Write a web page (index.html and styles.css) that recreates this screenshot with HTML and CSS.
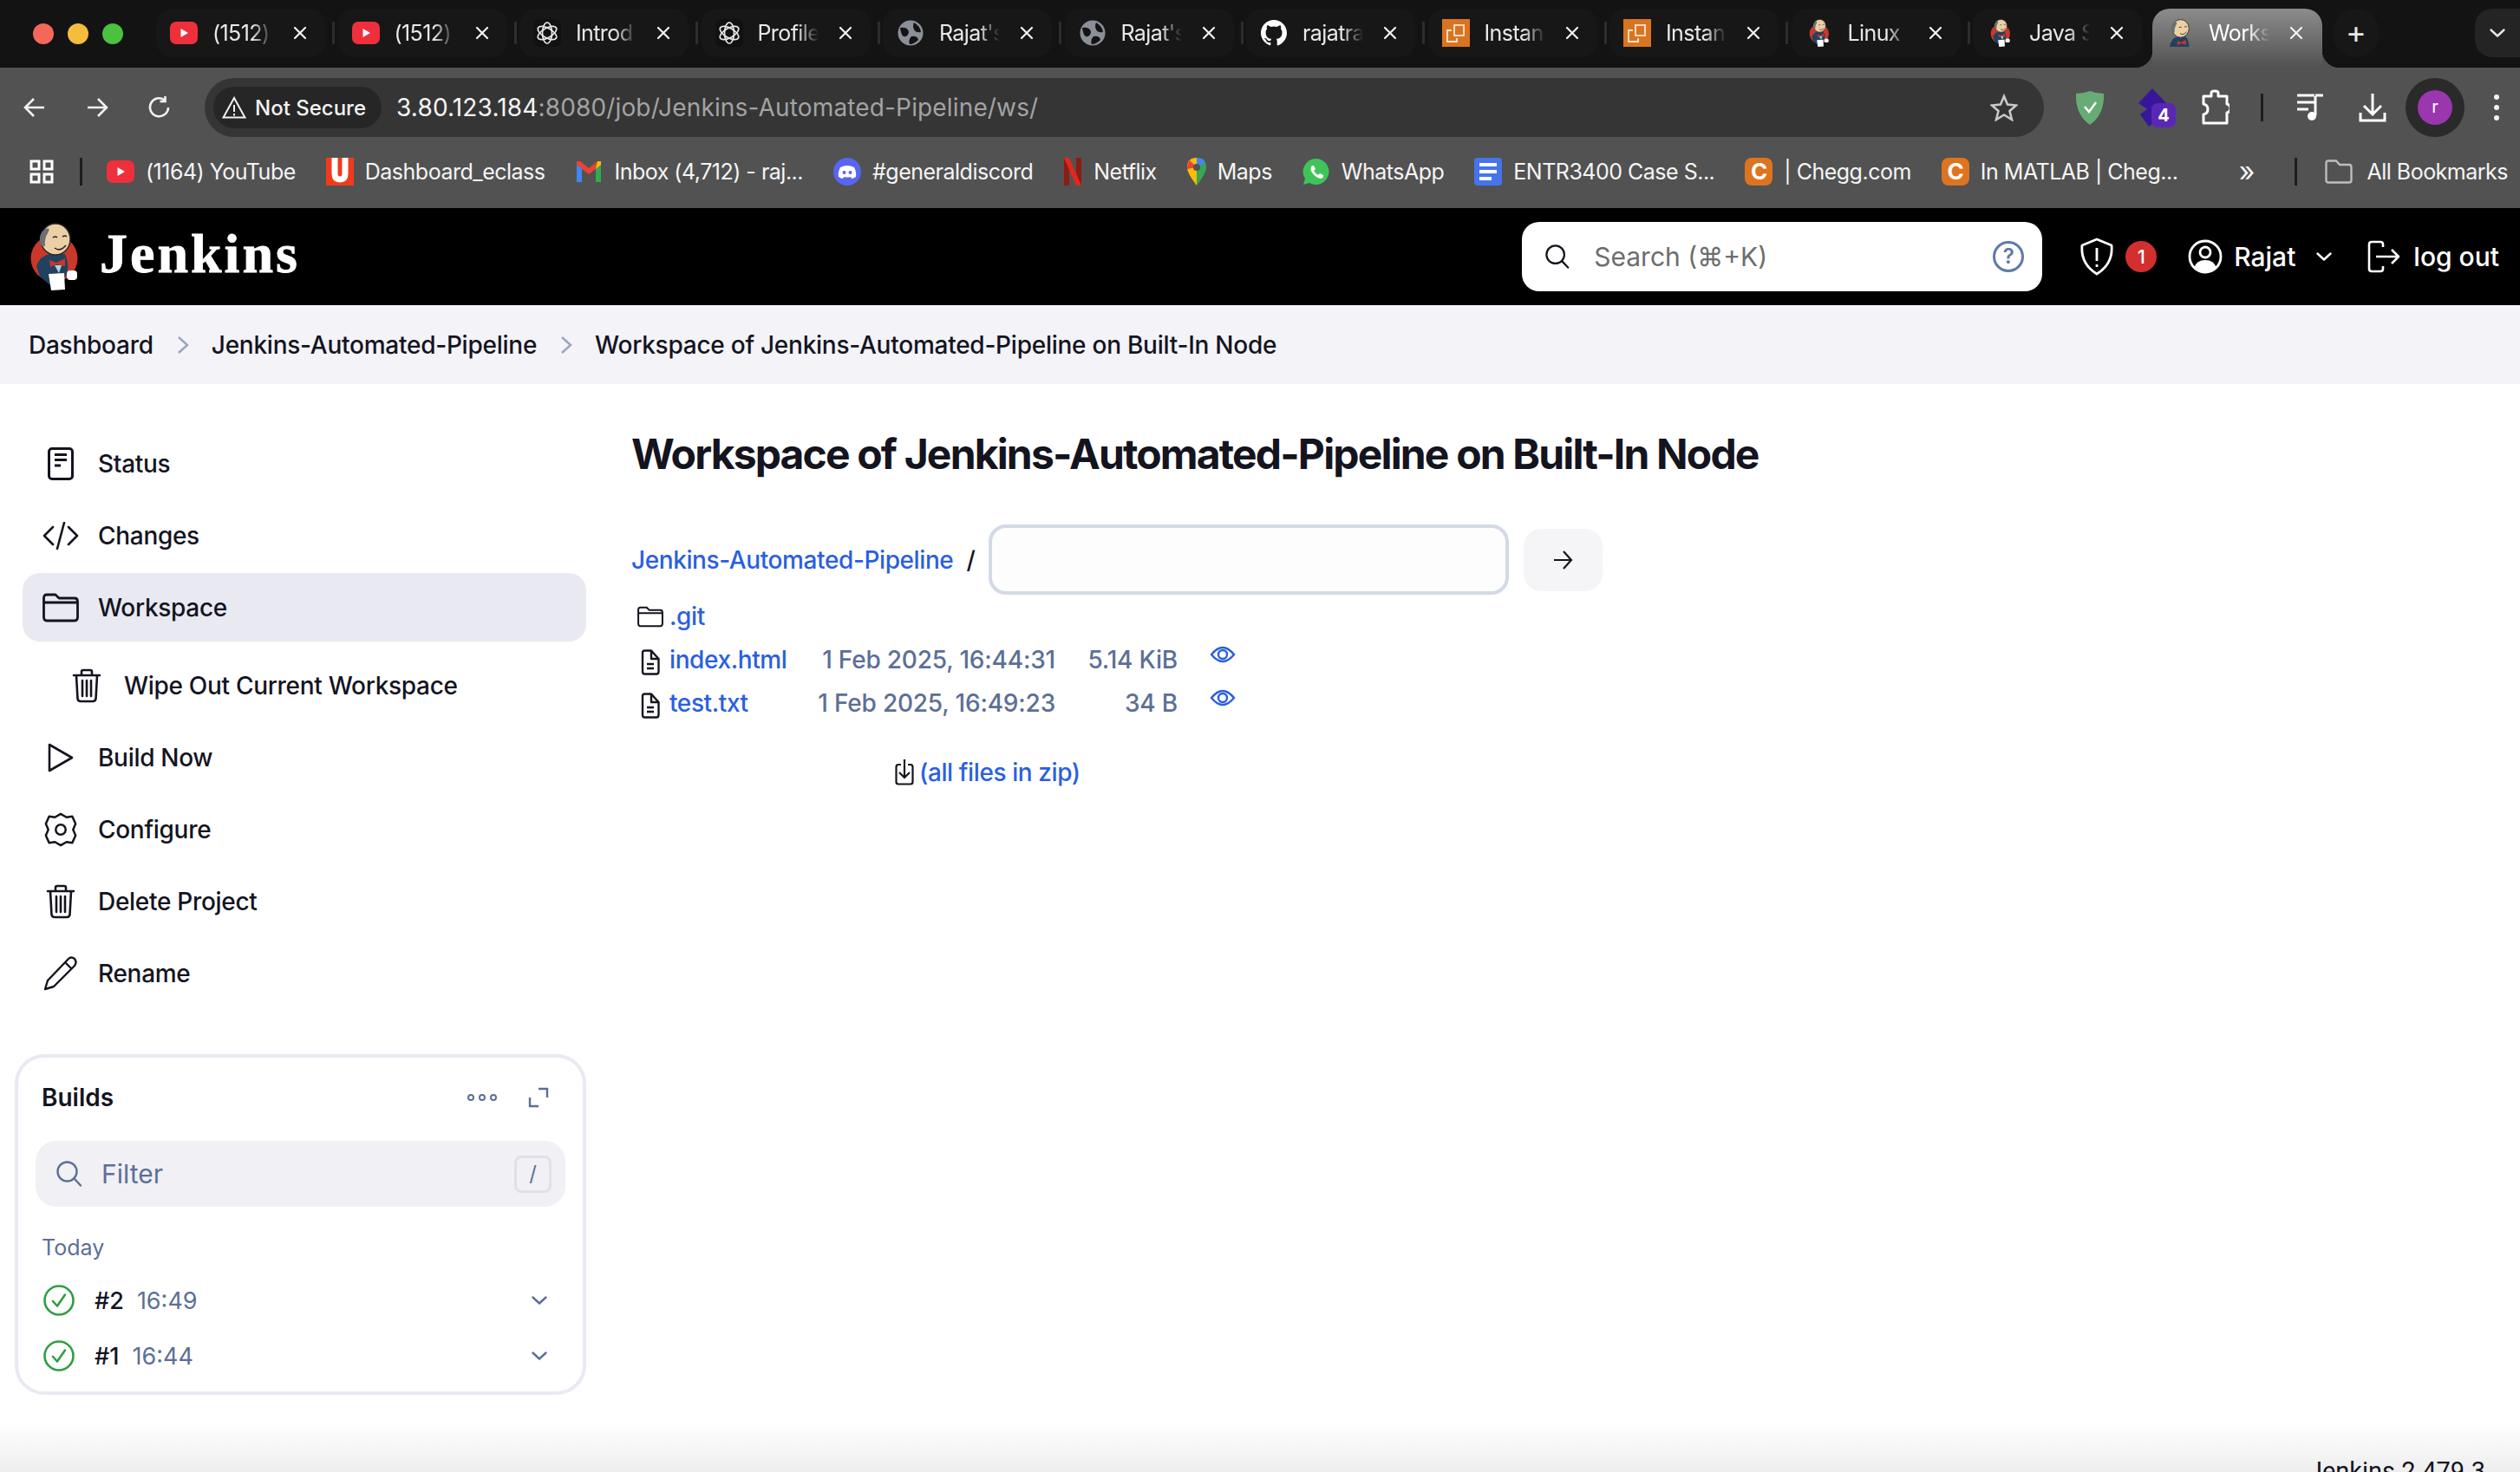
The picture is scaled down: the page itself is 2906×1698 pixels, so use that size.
FILE: index.html
```html
<!DOCTYPE html>
<html lang="en">
  <head>
    <meta charset="UTF-8" />
    <title>Jenkins-Automated-Pipeline Workspace</title>
    <link rel="stylesheet" href="styles.css">
  </head>
  <body>
    <svg class="sprite">
      <symbol id="i-yt" viewBox="0 0 32 32">
        <rect x="0" y="3" width="32" height="26" rx="7" fill="#ef2f3c" />
        <path d="M12.500 11 L21 16 L12.500 21Z" fill="#fff" />
      </symbol>
      <symbol id="i-gpt" viewBox="0 0 32 32">
        <rect width="32" height="32" rx="7" fill="#111" />
        <g fill="none" stroke="#e8e8e8" stroke-width="1.700">
          <ellipse cx="16" cy="16" rx="5.500" ry="12" />
          <ellipse cx="16" cy="16" rx="5.500" ry="12" transform="rotate(60 16 16)" />
          <ellipse cx="16" cy="16" rx="5.500" ry="12" transform="rotate(120 16 16)" />
        </g>
      </symbol>
      <symbol id="i-globe" viewBox="0 0 32 32">
        <circle cx="16" cy="16" r="14.500" fill="#8b9098" />
        <path d="M4 10 Q13 9 14 15 Q13 21 8 20 Q5 18 4 10Z M20 4 Q27 8 28 15 Q22 16 20 12 Q18 8 20 4Z M17 20 Q24 19 25 24 Q20 29 15 29 Q13 24 17 20Z" fill="#131313" />
      </symbol>
      <symbol id="i-gh" viewBox="0 0 32 32">
        <path fill="#fff" d="M16 1C7.700 1 1 7.700 1 16c0 6.600 4.300 12.200 10.300 14.200.8.100 1-.3 1-.7v-2.600c-4.200.9-5-1.800-5-1.800-.7-1.700-1.700-2.200-1.700-2.200-1.400-.9.100-.9.100-.9 1.500.1 2.300 1.500 2.300 1.500 1.300 2.300 3.500 1.600 4.400 1.300.1-1 .5-1.600 1-2-3.300-.4-6.800-1.700-6.800-7.400 0-1.600.6-3 1.500-4-.2-.4-.7-1.900.1-4 0 0 1.300-.4 4.100 1.500 1.200-.3 2.500-.5 3.700-.5s2.500.2 3.700.5c2.900-1.900 4.100-1.500 4.100-1.500.8 2.100.3 3.600.2 4 1 1 1.500 2.400 1.500 4 0 5.800-3.500 7-6.800 7.400.5.500 1 1.400 1 2.800v4.100c0 .4.300.9 1 .7C26.700 28.200 31 22.600 31 16 31 7.700 24.300 1 16 1Z" />
      </symbol>
      <symbol id="i-aws" viewBox="0 0 32 32">
        <rect width="32" height="32" fill="#d9741f" />
        <g fill="none" stroke="#f5e6d5" stroke-width="1.800">
          <rect x="14" y="7" width="11" height="12" />
          <path d="M11 13 H6 V26 H17 V22" />
        </g>
      </symbol>
      <symbol id="i-butler" viewBox="0 0 56 78">
        <circle cx="27.500" cy="41" r="27" fill="#c9382b" />
        <path d="M7 50 Q10 39 22 36 L40 36 Q46 50 41 62 L23 72 L11 62Z" fill="#20425f" />
        <path d="M22 43 L30 46 L40 41 L40 50 L30 48 L23 51Z" fill="#c8352b" />
        <path d="M28 49 L36 49 L33 58Z" fill="#b8d0e0" />
        <ellipse cx="29" cy="19" rx="17" ry="18" fill="#edcfa6" stroke="#2a2a2a" stroke-width="1.500" />
        <path d="M12 26 Q8 12 18 7 Q24 5 20 12 Q16 18 17 27Z" fill="#6b6f75" />
        <path d="M26 17 Q29 15 31 17 M37 16 Q40 14 42 16 M28 29 Q34 34 41 26" fill="none" stroke="#2a2a2a" stroke-width="1.600" />
        <path d="M21 59 L39 58 L40 77 L24 78Z" fill="#fff" />
        <rect x="42" y="55" width="12" height="11" rx="4" fill="#fff" />
      </symbol>
      <symbol id="i-head" viewBox="6 0 44 56">
        <path d="M7 56 Q10 39 22 36 L40 36 Q46 44 46 56Z" fill="#20425f" />
        <path d="M22 44 L30 47 L40 42 L40 52 L30 49 L23 53Z" fill="#c8352b" />
        <ellipse cx="29" cy="19" rx="17" ry="18" fill="#edcfa6" stroke="#2a2a2a" stroke-width="1.500" />
        <path d="M12 26 Q8 12 18 7 Q24 5 20 12 Q16 18 17 27Z" fill="#6b6f75" />
        <path d="M26 17 Q29 15 31 17 M37 16 Q40 14 42 16 M28 29 Q34 34 41 26" fill="none" stroke="#2a2a2a" stroke-width="1.600" />
      </symbol>
      <symbol id="i-x" viewBox="0 0 16 16">
        <path d="M2 2 L14 14 M14 2 L2 14" stroke="#f2f2f2" stroke-width="2.200" stroke-linecap="round" />
      </symbol>
      <symbol id="i-doc" viewBox="0 0 30 38">
        <rect x="1.500" y="1.500" width="27" height="35" rx="3.500" fill="none" stroke="currentColor" stroke-width="3" />
        <path d="M8 8.500 H22 M8 14.500 H22 M8 21 H15" stroke="currentColor" stroke-width="2.800" />
      </symbol>
      <symbol id="i-folder" viewBox="0 0 42 34">
        <path d="M1.500 6 Q1.500 2 5 2 H15 L19 6 H37 Q40.500 6 40.500 10 V28 Q40.500 32 37 32 H5 Q1.500 32 1.500 28Z M1.500 11 H40.500" fill="none" stroke="currentColor" stroke-width="2.800" stroke-linejoin="round" />
      </symbol>
      <symbol id="i-trash" viewBox="0 0 34 40">
        <path d="M2 8 H32 M11 8 V4 Q11 2 13 2 H21 Q23 2 23 4 V8 M5 8 L6.500 35 Q7 38 10 38 H24 Q27 38 27.500 35 L29 8 M12 14 V32 M17 14 V32 M22 14 V32" fill="none" stroke="currentColor" stroke-width="2.600" stroke-linecap="round" />
      </symbol>
      <symbol id="i-file" viewBox="0 0 22 30">
        <path d="M2 4 Q2 1.500 4.500 1.500 H12 L20.500 11 V25.500 Q20.500 28.500 18 28.500 H4.500 Q2 28.500 2 25.500Z M12 1.500 V11 H20.500 M7 17 H15 M7 22 H15" fill="none" stroke="currentColor" stroke-width="2.400" stroke-linejoin="round" />
      </symbol>
      <symbol id="i-eye" viewBox="0 0 30 20">
        <path d="M2 10 Q15 -6 28 10 Q15 26 2 10Z" fill="none" stroke="currentColor" stroke-width="2.400" />
        <circle cx="15" cy="10" r="5" fill="none" stroke="currentColor" stroke-width="2.400" />
      </symbol>
      <symbol id="i-check" viewBox="0 0 36 36">
        <circle cx="18" cy="18" r="16.500" fill="none" stroke="#2f9e44" stroke-width="2.600" />
        <path d="M11 19 L16 24.500 L25 11.500" fill="none" stroke="#2f9e44" stroke-width="2.600" stroke-linecap="round" stroke-linejoin="round" />
      </symbol>
      <symbol id="i-chev" viewBox="0 0 18 10">
        <path d="M1.500 1.500 L9 8.500 L16.500 1.500" fill="none" stroke="currentColor" stroke-width="2.400" stroke-linecap="round" stroke-linejoin="round" />
      </symbol>
      <symbol id="i-search" viewBox="0 0 30 30">
        <circle cx="12.500" cy="12.500" r="11" fill="none" stroke="currentColor" stroke-width="2.400" />
        <path d="M20.500 20.500 L28 28.500" stroke="currentColor" stroke-width="2.400" stroke-linecap="round" />
      </symbol>
    </svg>

    <div class="tabstrip">
      <div class="lights"><i class="light red"></i><i class="light amber"></i><i class="light green"></i></div>
      <div class="tab"><svg class="fav"><use href="#i-yt" /></svg><span class="tab-title">(1512)</span><svg class="tab-x"><use href="#i-x" /></svg></div><i class="tab-sep"></i>
      <div class="tab"><svg class="fav"><use href="#i-yt" /></svg><span class="tab-title">(1512)</span><svg class="tab-x"><use href="#i-x" /></svg></div><i class="tab-sep"></i>
      <div class="tab"><svg class="fav"><use href="#i-gpt" /></svg><span class="tab-title">Introd</span><svg class="tab-x"><use href="#i-x" /></svg></div><i class="tab-sep"></i>
      <div class="tab"><svg class="fav"><use href="#i-gpt" /></svg><span class="tab-title">Profile</span><svg class="tab-x"><use href="#i-x" /></svg></div><i class="tab-sep"></i>
      <div class="tab"><svg class="fav"><use href="#i-globe" /></svg><span class="tab-title">Rajat's</span><svg class="tab-x"><use href="#i-x" /></svg></div><i class="tab-sep"></i>
      <div class="tab"><svg class="fav"><use href="#i-globe" /></svg><span class="tab-title">Rajat's</span><svg class="tab-x"><use href="#i-x" /></svg></div><i class="tab-sep"></i>
      <div class="tab"><svg class="fav"><use href="#i-gh" /></svg><span class="tab-title">rajatra</span><svg class="tab-x"><use href="#i-x" /></svg></div><i class="tab-sep"></i>
      <div class="tab"><svg class="fav"><use href="#i-aws" /></svg><span class="tab-title">Instan</span><svg class="tab-x"><use href="#i-x" /></svg></div><i class="tab-sep"></i>
      <div class="tab"><svg class="fav"><use href="#i-aws" /></svg><span class="tab-title">Instan</span><svg class="tab-x"><use href="#i-x" /></svg></div><i class="tab-sep"></i>
      <div class="tab"><svg class="fav"><use href="#i-butler" /></svg><span class="tab-title">Linux</span><svg class="tab-x"><use href="#i-x" /></svg></div><i class="tab-sep"></i>
      <div class="tab"><svg class="fav"><use href="#i-butler" /></svg><span class="tab-title">Java S</span><svg class="tab-x"><use href="#i-x" /></svg></div>
      <div class="tab tab-active"><svg class="fav"><use href="#i-head" /></svg><span class="tab-title">Works</span><svg class="tab-x"><use href="#i-x" /></svg></div>
      <span class="new-tab">+</span>
      <span class="tab-menu"><svg class="tab-menu-icon"><use href="#i-chev" /></svg></span>
    </div>

    <div class="toolbar">
      <svg class="tool-icon" viewBox="0 0 28 28"><path d="M25 14 H4 M13 4 L3 14 L13 24" fill="none" stroke="#f2f2f2" stroke-width="2.600" /></svg>
      <svg class="tool-icon" viewBox="0 0 28 28"><path d="M3 14 H24 M15 4 L25 14 L15 24" fill="none" stroke="#f2f2f2" stroke-width="2.600" /></svg>
      <svg class="tool-icon" viewBox="0 0 28 28"><path d="M24 14 A10.500 10.500 0 1 1 20 5.500 M20.500 1 V7 H14.500" fill="none" stroke="#f2f2f2" stroke-width="2.600" /></svg>
      <div class="omnibox">
        <span class="chip">
          <svg class="chip-icon" viewBox="0 0 28 26"><path d="M14 2 L26.500 24.500 H1.500Z M14 10 V18 M14 20 V22.500" fill="none" stroke="#f2f2f2" stroke-width="2" /></svg>
          Not Secure
        </span>
        <span class="url"><b>3.80.123.184</b>:8080/job/Jenkins-Automated-Pipeline/ws/</span>
        <svg class="star" viewBox="0 0 32 32"><path d="M16 3 L20 12.500 L30 13.500 L22.500 20 L25 30 L16 24.500 L7 30 L9.500 20 L2 13.500 L12 12.500Z" fill="none" stroke="#c8c8c8" stroke-width="2.600" /></svg>
      </div>
      <svg class="ext ext-shield" viewBox="0 0 32 40"><path d="M16 1 Q24 4 32 4 Q33 28 16 40 Q-1 28 0 4 Q8 4 16 1Z" fill="#68ac75" /><path d="M10 19 L15 25 L23 14" fill="none" stroke="#fff" stroke-width="2.400" /></svg>
      <span class="ext-stack">
        <svg class="ext-stack-icon" viewBox="0 0 32 44"><path d="M16 0 L32 17 L20 24 L28 32 L12 44 L2 30 L10 24 L0 17Z" fill="#37169c" /></svg>
        <span class="ext-badge">4</span>
      </span>
      <svg class="ext ext-puzzle" viewBox="0 0 32 42"><path d="M2 8 H11 V4 Q11 2 15 2 Q19 2 19 4 V8 H29 V17 Q33 18 33 22 Q33 26 29 27 V39 H2 V29 Q7 28 7 23 Q7 18 2 17Z" fill="none" stroke="#fff" stroke-width="3" stroke-linejoin="round" /></svg>
      <i class="tool-sep"></i>
      <svg class="ext ext-queue" viewBox="0 0 32 34"><path d="M1 3 H21 M1 11 H21 M1 19 H14 M22 4 V26 M22 3 H31" fill="none" stroke="#fff" stroke-width="3" /><circle cx="18" cy="27" r="5" fill="#fff" /></svg>
      <svg class="ext ext-down" viewBox="0 0 32 34"><path d="M16 1 V24 M6 15 L16 25 L26 15 M2 23 V32 H30 V23" fill="none" stroke="#fff" stroke-width="3" /></svg>
      <span class="avatar-ring"><span class="avatar">r</span></span>
      <span class="kebab"><i></i><i></i><i></i></span>
    </div>

    <div class="bookmarks">
      <svg class="apps" viewBox="0 0 28 28"><path d="M2 2 H11 V11 H2Z M17 2 H26 V11 H17Z M2 17 H11 V26 H2Z M17 17 H26 V26 H17Z" fill="none" stroke="#fff" stroke-width="3" /></svg>
      <i class="tool-sep bm-sep"></i>
      <span class="bm"><svg class="bm-icon"><use href="#i-yt" /></svg>(1164) YouTube</span>
      <span class="bm"><svg class="bm-icon" viewBox="0 0 32 32"><rect width="32" height="32" fill="#ef3b1c" /><path d="M10 0 V18 Q10 25 16 25 Q22 25 22 18 V0" fill="none" stroke="#fff" stroke-width="7" /></svg>Dashboard_eclass</span>
      <span class="bm"><svg class="bm-icon" viewBox="0 0 32 32"><path d="M2 28 V8 L6 5 L8 12 V28Z" fill="#4285f4" /><path d="M24 28 V12 L26 5 L30 8 V28Z" fill="#34a853" /><path d="M2 8 L16 19 L30 8 L30 4 L26 4 L16 12 L6 4 L2 4Z" fill="#ea4335" /><path d="M26 4 L30 4 V8 L24 13Z" fill="#fbbc04" /></svg>Inbox (4,712) - raj...</span>
      <span class="bm"><svg class="bm-icon" viewBox="0 0 32 32"><circle cx="16" cy="16" r="16" fill="#5865f2" /><path d="M8 11 Q16 7 24 11 Q27 17 26 22 Q23 24 21 24 L20 22 Q16 23 12 22 L11 24 Q9 24 6 22 Q5 17 8 11Z" fill="#fff" /><circle cx="12.500" cy="17" r="2" fill="#5865f2" /><circle cx="19.500" cy="17" r="2" fill="#5865f2" /></svg>#generaldiscord</span>
      <span class="bm"><svg class="bm-icon bm-narrow" viewBox="0 0 20 32"><path d="M0 0 H6 V32 H0Z M14 0 H20 V32 H14Z" fill="#8e1b14" /><path d="M0 0 H6 L20 32 H14Z" fill="#e0291e" /></svg>Netflix</span>
      <span class="bm"><svg class="bm-icon bm-narrow" viewBox="0 0 22 32"><path d="M11 0 Q22 0 22 11 Q22 18 11 32Z" fill="#34a853" /><path d="M11 0 Q0 0 0 11 Q0 18 11 32Z" fill="#fbbc04" /><path d="M3 3 L11 11 L0 13 Q0 6 3 3Z" fill="#ea4335" /><path d="M11 0 Q18 0 21 6 L11 11Z" fill="#4285f4" /><circle cx="11" cy="11" r="4" fill="#525252" /></svg>Maps</span>
      <span class="bm"><svg class="bm-icon" viewBox="0 0 32 32"><path d="M16 1 A15 15 0 1 1 8 29 L1 31 L3 24 A15 15 0 0 1 16 1Z" fill="#3fc45a" /><path d="M11 9 Q8 12 11 17 Q15 23 21 24 Q25 23 24 20 L20 18 L18 20 Q15 18 13 15 L15 13 L13 9Z" fill="#fff" /></svg>WhatsApp</span>
      <span class="bm"><svg class="bm-icon" viewBox="0 0 32 32"><rect width="32" height="32" rx="4" fill="#4574ed" /><path d="M6 6 H26 V10 H6Z M6 14 H26 V18 H6Z M6 22 H20 V26 H6Z" fill="#fff" /></svg>ENTR3400 Case S...</span>
      <span class="bm"><span class="chegg">C</span>| Chegg.com</span>
      <span class="bm"><span class="chegg">C</span>In MATLAB | Cheg...</span>
      <span class="bm-more">»</span>
      <i class="tool-sep bm-sep2"></i>
      <span class="bm bm-all"><svg class="bm-icon" viewBox="0 0 32 28"><path d="M1.500 4 Q1.500 1.500 4 1.500 H13 L17 6 H28 Q30.500 6 30.500 9 V24 Q30.500 26.500 28 26.500 H4 Q1.500 26.500 1.500 24Z" fill="none" stroke="#bdbdbd" stroke-width="2.400" /></svg>All Bookmarks</span>
    </div>

    <header class="jk-header">
      <svg class="jk-logo"><use href="#i-butler" /></svg>
      <span class="jk-name">Jenkins</span>
      <div class="jk-search">
        <svg class="jk-search-icon"><use href="#i-search" /></svg>
        <span class="jk-search-text">Search (⌘+K)</span>
        <span class="jk-help">?</span>
      </div>
      <svg class="jk-shield" viewBox="0 0 40 44"><path d="M20 2 L37 9 Q39 30 20 42 Q1 30 3 9Z M20 12 V27 M20 31 V34" fill="none" stroke="#fff" stroke-width="2.800" stroke-linejoin="round" /></svg>
      <span class="jk-badge">1</span>
      <svg class="jk-user" viewBox="0 0 40 40"><circle cx="20" cy="20" r="18" fill="none" stroke="#fff" stroke-width="2.800" /><circle cx="20" cy="15" r="6" fill="none" stroke="#fff" stroke-width="2.800" /><path d="M7 33 Q10 24 20 24 Q30 24 33 33 Q20 42 7 33Z" fill="#fff" /></svg>
      <span class="jk-username">Rajat</span>
      <svg class="jk-chev"><use href="#i-chev" /></svg>
      <svg class="jk-logout" viewBox="0 0 38 38"><path d="M18 8 V5 Q18 2 15 2 H5 Q2 2 2 5 V33 Q2 36 5 36 H15 Q18 36 18 33 V30 M10 19 H36 M28 11 L36 19 L28 27" fill="none" stroke="#fff" stroke-width="2.600" stroke-linejoin="round" /></svg>
      <span class="jk-logout-text">log out</span>
    </header>

    <nav class="breadcrumbs">
      <span>Dashboard</span>
      <svg class="crumb-sep" viewBox="0 0 14 22"><path d="M2 2 L12 11 L2 20" fill="none" stroke="#98a4bf" stroke-width="2.400" /></svg>
      <span>Jenkins-Automated-Pipeline</span>
      <svg class="crumb-sep" viewBox="0 0 14 22"><path d="M2 2 L12 11 L2 20" fill="none" stroke="#98a4bf" stroke-width="2.400" /></svg>
      <span>Workspace of Jenkins-Automated-Pipeline on Built-In Node</span>
    </nav>

    <div class="layout">
      <aside class="sidebar">
        <ul class="side-nav">
          <li class="nav-item"><span class="nav-icon"><svg class="ic-status"><use href="#i-doc" /></svg></span>Status</li>
          <li class="nav-item"><span class="nav-icon"><svg class="ic-wide" viewBox="0 0 42 32"><path d="M12 6 L2 16 L12 26 M30 6 L40 16 L30 26 M25 1 L17 31" fill="none" stroke="currentColor" stroke-width="2.600" stroke-linecap="round" stroke-linejoin="round" /></svg></span>Changes</li>
          <li class="nav-item nav-active"><span class="nav-icon"><svg class="ic-wide ic-folder"><use href="#i-folder" /></svg></span>Workspace</li>
          <li class="nav-item nav-sub"><span class="nav-icon"><svg class="ic-trash"><use href="#i-trash" /></svg></span>Wipe Out Current Workspace</li>
          <li class="nav-item"><span class="nav-icon"><svg class="ic-play" viewBox="0 0 30 34"><path d="M2 2 L28 17 L2 32Z" fill="none" stroke="currentColor" stroke-width="2.600" stroke-linejoin="round" /></svg></span>Build Now</li>
          <li class="nav-item"><span class="nav-icon"><svg class="ic-gear" viewBox="0 0 40 42"><path d="M20 2 L27 6 L34 5 L38 14 L35 21 L38 28 L34 37 L27 36 L20 40 L13 36 L6 37 L2 28 L5 21 L2 14 L6 5 L13 6Z" fill="none" stroke="currentColor" stroke-width="2.600" stroke-linejoin="round" /><circle cx="20" cy="21" r="6" fill="none" stroke="currentColor" stroke-width="2.600" /></svg></span>Configure</li>
          <li class="nav-item"><span class="nav-icon"><svg class="ic-trash"><use href="#i-trash" /></svg></span>Delete Project</li>
          <li class="nav-item"><span class="nav-icon"><svg class="ic-gear" viewBox="0 0 40 40"><path d="M2 38 L5 28 L29 3 Q32 0 36 3 Q39 7 36 11 L12 35Z M25 7 L33 15" fill="none" stroke="currentColor" stroke-width="2.400" stroke-linejoin="round" /></svg></span>Rename</li>
        </ul>

        <section class="builds">
          <div class="builds-head">
            <span class="builds-title">Builds</span>
            <span class="builds-dots"><i></i><i></i><i></i></span>
            <svg class="builds-expand" viewBox="0 0 24 24"><path d="M12 2 H22 V12 M2 12 V22 H12" fill="none" stroke="currentColor" stroke-width="2.400" /></svg>
          </div>
          <div class="filter">
            <svg class="filter-icon"><use href="#i-search" /></svg>
            <span class="filter-text">Filter</span>
            <kbd class="filter-key">/</kbd>
          </div>
          <div class="builds-day">Today</div>
          <div class="build-row">
            <svg class="build-check"><use href="#i-check" /></svg>
            <span class="build-num">#2</span>
            <span class="build-time">16:49</span>
            <svg class="build-chev"><use href="#i-chev" /></svg>
          </div>
          <div class="build-row">
            <svg class="build-check"><use href="#i-check" /></svg>
            <span class="build-num">#1</span>
            <span class="build-time">16:44</span>
            <svg class="build-chev"><use href="#i-chev" /></svg>
          </div>
        </section>
      </aside>

      <main class="content">
        <h1 class="page-title">Workspace of Jenkins-Automated-Pipeline on Built-In Node</h1>
        <div class="path-row">
          <a class="link" href="#">Jenkins-Automated-Pipeline</a>
          <span class="path-slash">/</span>
          <input class="path-input" type="text" />
          <button class="path-go"><svg class="path-go-icon" viewBox="0 0 24 24"><path d="M2 12 H22 M13 2 L22 12 L13 22" fill="none" stroke="#14141f" stroke-width="2.200" /></svg></button>
        </div>
        <table class="files">
          <tr>
            <td class="col-name"><span class="file-slot"><svg class="ic-dir"><use href="#i-folder" /></svg></span><a class="link" href="#">.git</a></td>
            <td></td><td></td><td></td>
          </tr>
          <tr>
            <td class="col-name"><span class="file-slot"><svg class="ic-file"><use href="#i-file" /></svg></span><a class="link" href="#">index.html</a></td>
            <td class="col-date">1 Feb 2025, 16:44:31</td>
            <td class="col-size">5.14 KiB</td>
            <td class="col-view"><svg class="ic-eye"><use href="#i-eye" /></svg></td>
          </tr>
          <tr>
            <td class="col-name"><span class="file-slot"><svg class="ic-file"><use href="#i-file" /></svg></span><a class="link" href="#">test.txt</a></td>
            <td class="col-date">1 Feb 2025, 16:49:23</td>
            <td class="col-size">34 B</td>
            <td class="col-view"><svg class="ic-eye"><use href="#i-eye" /></svg></td>
          </tr>
        </table>
        <div class="zip-row">
          <svg class="ic-zip" viewBox="0 0 22 30"><path d="M7 6 H4 Q1.500 6 1.500 9 V26 Q1.500 28.500 4 28.500 H18 Q20.500 28.500 20.500 26 V9 Q20.500 6 18 6 H15 M11 0 V21 M5 15 L11 21 L17 15" fill="none" stroke="#14141f" stroke-width="2.200" /></svg>
          <a class="link" href="#">(all files in zip)</a>
        </div>
      </main>
    </div>

    <footer class="jk-footer">Jenkins 2.479.3</footer>
  </body>
</html>
```

FILE: styles.css
```css
* {
  box-sizing: border-box;
}
html,
body {
  height: 1698px;
  overflow: hidden;
}
body {
  margin: 0;
  font-family: Inter, "Liberation Sans", sans-serif;
  background-color: #fff;
  color: #14141f;
}
.sprite {
  display: none;
}
svg {
  display: block;
  flex: none;
}
ul {
  list-style: none;
  margin: 0;
  padding: 0;
}

/* browser tabs */
.tabstrip {
  display: flex;
  align-items: flex-start;
  height: 78px;
  padding-top: 10px;
  background-color: #131313;
  color: #e8e8e8;
  font-size: 25px;
}
.lights {
  display: flex;
  gap: 16px;
  width: 180px;
  padding: 17px 0 0 38px;
  flex: none;
}
.light {
  width: 24px;
  height: 24px;
  border-radius: 50%;
}
.red {
  background-color: #f4685a;
}
.amber {
  background-color: #f6bd3b;
}
.green {
  background-color: #4cc03f;
}
.tab {
  display: flex;
  flex: none;
  align-items: center;
  width: 195px;
  height: 56px;
  margin-right: 8px;
  padding-left: 16px;
  border-radius: 18px;
  background-color: #171717;
}
.tab-sep {
  flex: none;
  width: 3px;
  height: 26px;
  margin: 15px 3.5px 0 0;
  background-color: #2d2d2d;
}
.fav {
  width: 32px;
  height: 32px;
}
.tab-title {
  width: 70px;
  margin: 0 0 0 17px;
  overflow: hidden;
  white-space: nowrap;
  letter-spacing: -0.6px;
  -webkit-mask-image: linear-gradient(to right, #000 65%, transparent 100%);
  mask-image: linear-gradient(to right, #000 65%, transparent 100%);
}
.tab-x {
  width: 16px;
  height: 16px;
  margin-left: 23px;
}
.tab-active {
  position: relative;
  width: 196px;
  height: 68px;
  margin-left: 4px;
  margin-right: 0;
  padding-bottom: 12px;
  border-radius: 20px 20px 0 0;
  background: linear-gradient(#8c8c8c, #525252);
  color: #fff;
}
.tab-active::before,
.tab-active::after {
  content: "";
  position: absolute;
  bottom: 0;
  width: 20px;
  height: 20px;
}
.tab-active::before {
  left: -20px;
  background: radial-gradient(circle at 0 0, transparent 20px, #525252 20.5px);
}
.tab-active::after {
  right: -20px;
  background: radial-gradient(circle at 100% 0, transparent 20px, #525252 20.5px);
}
.new-tab {
  width: 54px;
  height: 56px;
  margin-left: 12px;
  border-radius: 27px;
  background-color: #171717;
  font-size: 36px;
  line-height: 54px;
  text-align: center;
}
.tab-menu {
  display: flex;
  align-items: center;
  justify-content: center;
  width: 52px;
  height: 56px;
  margin-left: auto;
  border-radius: 20px 0 0 20px;
  background-color: #242424;
}
.tab-menu-icon {
  width: 18px;
  height: 10px;
}

/* toolbar */
.toolbar {
  display: flex;
  align-items: center;
  height: 80px;
  padding: 12px 0 0 26px;
  background-color: #525252;
  color: #fff;
}
.tool-icon {
  width: 28px;
  height: 28px;
  margin-right: 44px;
}
.omnibox {
  display: flex;
  flex: none;
  align-items: center;
  width: 2121px;
  height: 68px;
  margin-left: -6px;
  padding: 0 30px 0 10px;
  border-radius: 34px;
  background-color: #353535;
}
.chip {
  display: flex;
  align-items: center;
  gap: 10px;
  height: 48px;
  padding: 0 18px 0 10px;
  border-radius: 24px;
  background-color: #262626;
  color: #f2f2f2;
  font-size: 24px;
  font-weight: 500;
  white-space: nowrap;
}
.chip-icon {
  width: 28px;
  height: 26px;
}
.url {
  margin-left: 17px;
  color: #a3a3a3;
  font-size: 28px;
  letter-spacing: 0.15px;
  white-space: nowrap;
}
.url b {
  color: #f5f5f5;
  font-weight: 400;
}
.star {
  width: 32px;
  height: 32px;
  margin-left: auto;
}
.ext-shield {
  width: 32px;
  height: 40px;
  margin-left: 37px;
}
.ext-stack {
  position: relative;
  flex: none;
  width: 32px;
  height: 44px;
  margin-left: 40px;
}
.ext-stack-icon {
  width: 32px;
  height: 44px;
}
.ext-badge {
  position: absolute;
  left: 15px;
  top: 17px;
  width: 28px;
  height: 28px;
  border-radius: 7px;
  background-color: #5a27b5;
  font-size: 20px;
  font-weight: 700;
  line-height: 28px;
  text-align: center;
}
.ext-puzzle {
  width: 32px;
  height: 42px;
  margin-left: 41px;
}
.tool-sep {
  flex: none;
  width: 3px;
  height: 32px;
  background-color: #1d1d1d;
}
.toolbar .tool-sep {
  margin-left: 36px;
  height: 32px;
}
.ext-queue {
  width: 32px;
  height: 34px;
  margin-left: 38px;
}
.ext-down {
  width: 32px;
  height: 34px;
  margin-left: 40px;
}
.avatar-ring {
  display: flex;
  flex: none;
  align-items: center;
  justify-content: center;
  width: 68px;
  height: 68px;
  margin-left: 22px;
  border-radius: 50%;
  background-color: #2a2a2a;
}
.avatar {
  width: 40px;
  height: 40px;
  border-radius: 50%;
  background-color: #9a36ae;
  font-size: 20px;
  line-height: 38px;
  text-align: center;
}
.kebab {
  display: flex;
  flex-direction: column;
  gap: 6px;
  margin-left: 34px;
}
.kebab i {
  width: 6px;
  height: 6px;
  border-radius: 50%;
  background-color: #f2f2f2;
}

/* bookmarks bar */
.bookmarks {
  display: flex;
  align-items: center;
  height: 82px;
  padding: 0 0 2px 34px;
  background-color: #525252;
  color: #f5f5f5;
  font-size: 25px;
  white-space: nowrap;
}
.apps {
  width: 28px;
  height: 28px;
}
.bm-sep {
  margin: 0 28px 0 30px;
}
.bm {
  display: flex;
  align-items: center;
  gap: 13px;
  margin-right: 35px;
  letter-spacing: -0.5px;
}
.bm-icon {
  width: 32px;
  height: 32px;
}
.bm-narrow {
  width: 22px;
}
.chegg {
  width: 32px;
  height: 32px;
  border-radius: 8px;
  background-color: #dd7420;
  color: #fff;
  font-size: 26px;
  font-weight: 700;
  line-height: 32px;
  text-align: center;
}
.bm-more {
  margin-left: auto;
  font-size: 32px;
  line-height: 32px;
}
.bm-sep2 {
  margin: 0 32px 0 46px;
}
.bm-all {
  margin-right: 14px;
  gap: 16px;
}

/* jenkins header */
.jk-header {
  display: flex;
  align-items: center;
  height: 112px;
  padding-left: 35px;
  background-color: #000;
  color: #fff;
}
.jk-logo {
  width: 56px;
  height: 78px;
}
.jk-name {
  margin: 0 0 6px 24px;
  font-family: "Liberation Serif", serif;
  font-size: 64px;
  font-weight: 700;
  letter-spacing: 3px;
  -webkit-text-stroke: 0.8px #fff;
}
.jk-search {
  display: flex;
  align-items: center;
  width: 600px;
  height: 80px;
  margin-left: auto;
  padding: 0 21px 0 27px;
  border-radius: 20px;
  background-color: #fff;
  color: #14141f;
}
.jk-search-icon {
  width: 28px;
  height: 28px;
}
.jk-search-text {
  margin-left: 28px;
  color: #6d6d6d;
  font-size: 30px;
}
.jk-help {
  width: 36px;
  height: 36px;
  margin-left: auto;
  border: 3px solid #5f7aa8;
  border-radius: 50%;
  color: #5f7aa8;
  font-size: 24px;
  font-weight: 600;
  line-height: 30px;
  text-align: center;
}
.jk-shield {
  width: 40px;
  height: 44px;
  margin-left: 43px;
}
.jk-badge {
  width: 36px;
  height: 36px;
  margin-left: 13px;
  border-radius: 50%;
  background-color: #d32f2f;
  font-size: 22px;
  font-weight: 500;
  line-height: 36px;
  text-align: center;
}
.jk-user {
  width: 40px;
  height: 40px;
  margin-left: 36px;
}
.jk-username,
.jk-logout-text {
  margin-left: 13px;
  font-size: 30px;
  font-weight: 500;
}
.jk-chev {
  width: 18px;
  height: 10px;
  margin-left: 24px;
  color: #fff;
}
.jk-logout {
  width: 38px;
  height: 38px;
  margin-left: 41px;
}
.jk-logout-text {
  margin-left: 15px;
  margin-right: 24px;
}

/* breadcrumbs */
.breadcrumbs {
  display: flex;
  align-items: center;
  height: 91px;
  padding-left: 33px;
  background-color: #f3f3f8;
  font-size: 28px;
  font-weight: 500;
  letter-spacing: -0.25px;
}
.crumb-sep {
  width: 14px;
  height: 22px;
  margin: 0 26px 0 27px;
}

/* sidebar */
.layout {
  display: flex;
  height: 1197px;
}
.sidebar {
  width: 676px;
  padding: 52px 0 0 17px;
}
.side-nav {
  display: flex;
  flex-direction: column;
  gap: 4px;
  margin-left: 9px;
}
.nav-item {
  display: flex;
  align-items: center;
  height: 79px;
  border-radius: 20px;
  font-size: 28px;
  font-weight: 500;
  letter-spacing: -0.3px;
}
.nav-active {
  background-color: #e9e9f2;
}
.nav-sub {
  margin-top: 7px;
  padding-left: 30px;
}
.nav-icon {
  display: flex;
  align-items: center;
  justify-content: center;
  width: 87px;
}
.ic-status {
  width: 30px;
  height: 38px;
}
.ic-wide {
  width: 42px;
  height: 32px;
}
.ic-folder {
  height: 34px;
}
.ic-trash {
  width: 34px;
  height: 40px;
}
.ic-play {
  width: 30px;
  height: 34px;
}
.ic-gear {
  width: 40px;
  height: 40px;
}

/* builds card */
.builds {
  height: 393px;
  margin-top: 54px;
  padding: 0 20px;
  border: 4px solid #e9e9f2;
  border-radius: 34px;
}
.builds-head {
  display: flex;
  align-items: center;
  height: 92px;
  margin-bottom: 4px;
  padding: 0 0 0 7px;
  color: #5c6f97;
}
.builds-title {
  margin-right: auto;
  color: #14141f;
  font-size: 28px;
  font-weight: 600;
}
.builds-dots {
  display: flex;
  gap: 5px;
}
.builds-dots i {
  width: 8px;
  height: 8px;
  border: 2px solid #5c6f97;
  border-radius: 50%;
}
.builds-expand {
  width: 24px;
  height: 24px;
  margin: 0 19px 0 36px;
}
.filter {
  display: flex;
  align-items: center;
  width: 611px;
  height: 76px;
  padding: 0 16px 0 24px;
  border-radius: 24px;
  background-color: #f0f0f5;
  color: #5c6f97;
}
.filter-icon {
  width: 30px;
  height: 30px;
}
.filter-text {
  margin-left: 22px;
  font-size: 30px;
}
.filter-key {
  width: 43px;
  height: 43px;
  margin-left: auto;
  border: 3px solid #e0e0ea;
  border-radius: 8px;
  font-family: Inter, sans-serif;
  font-size: 24px;
  line-height: 36px;
  text-align: center;
}
.builds-day {
  height: 52px;
  margin: 24px 0 0 7px;
  color: #5c6f97;
  font-size: 25px;
  line-height: 46px;
}
.build-row {
  display: flex;
  align-items: center;
  height: 64px;
  padding-left: 9px;
  font-size: 27px;
}
.build-check {
  width: 36px;
  height: 36px;
  margin-right: 23px;
}
.build-num {
  font-weight: 500;
  margin-right: 15px;
}
.build-time {
  color: #5c6f97;
  margin-right: auto;
}
.build-chev {
  width: 18px;
  height: 10px;
  margin-right: 21px;
  color: #5c6f97;
}

/* main content */
.content {
  flex: 1;
  padding: 51px 0 0 52px;
}
.page-title {
  height: 60px;
  margin: 0 0 51px;
  font-size: 48px;
  font-weight: 700;
  line-height: 60px;
  letter-spacing: -1.84px;
}
.link {
  color: #2b5fdf;
  font-weight: 500;
  letter-spacing: -0.4px;
  text-decoration: none;
}
.path-row {
  display: flex;
  align-items: center;
  height: 81px;
  font-size: 28px;
  font-weight: 500;
}
.path-slash {
  margin: 0 15px;
}
.path-input {
  width: 600px;
  height: 81px;
  border: 4px solid #d3dae5;
  border-radius: 20px;
  background-color: #fdfdfd;
}
.path-go {
  display: flex;
  align-items: center;
  justify-content: center;
  width: 91px;
  height: 72px;
  margin-left: 17px;
  border: none;
  border-radius: 20px;
  background-color: #f5f5f8;
}
.path-go-icon {
  width: 24px;
  height: 24px;
}
.files {
  border-collapse: collapse;
  font-size: 28px;
}
.files td {
  height: 50px;
  padding: 0;
}
.col-name {
  display: flex;
  align-items: center;
  width: 202px;
  height: 50px;
}
.file-slot {
  display: flex;
  justify-content: center;
  width: 44px;
}
.ic-dir {
  width: 30px;
  height: 25px;
}
.ic-file {
  width: 22px;
  height: 30px;
  margin-top: 6px;
}
.col-date,
.col-size {
  color: #5c6f97;
  text-align: right;
  white-space: nowrap;
  font-weight: 500;
  letter-spacing: -0.2px;
}
.col-date {
  width: 287px;
}
.col-size {
  width: 141px;
}
.col-view {
  padding-left: 37px !important;
  color: #2b5fdf;
}
.ic-eye {
  width: 30px;
  height: 20px;
  margin-bottom: 12px;
}
.zip-row {
  display: flex;
  align-items: center;
  gap: 6px;
  height: 50px;
  margin-top: 30px;
  padding-left: 304px;
  font-size: 28px;
}
.ic-zip {
  width: 22px;
  height: 30px;
}

.jk-footer {
  height: 100px;
  padding: 40px 40px 0 0;
  background: linear-gradient(#fff, #eee 58px);
  font-family: Roboto, sans-serif;
  font-size: 29px;
  text-align: right;
}
```
